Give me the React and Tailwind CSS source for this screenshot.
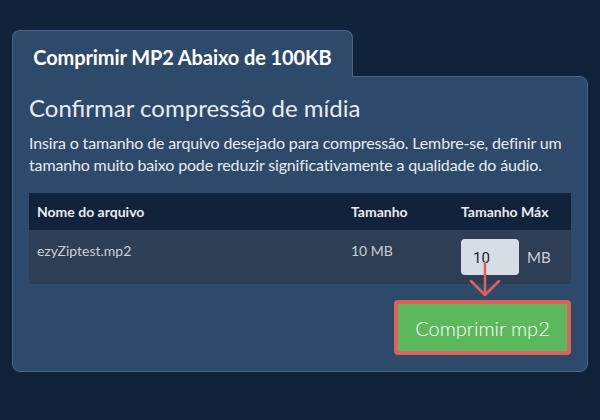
export default function App() {
  return (
    <div
      className="w-[600px] h-[420px] bg-[#10233a] px-3 pt-[30px]"
      style={{ fontFamily: "Lato, 'Open Sans', sans-serif" }}
    >
      <div className="w-[341px] h-[47px] bg-[#2d4a6b] border border-b-0 border-[#4a6788] rounded-t-lg flex items-center justify-center pt-[5px] relative z-10 -mb-px">
        <h1 className="text-[20px] font-bold text-white tracking-[-0.1px]">Comprimir MP2 Abaixo de 100KB</h1>
      </div>
      <div className="bg-[#2d4a6b] border border-[#4a6788] rounded-b-lg rounded-tr-lg px-4 pb-4 pt-[16px]">
        <h2 className="text-[24px] leading-[30px] text-[#e8ebef]">Confirmar compressão de mídia</h2>
        <p className="text-[16px] leading-[22px] tracking-[-0.15px] text-[#e8ebef] mt-[9px] -mr-2">
          Insira o tamanho de arquivo desejado para compressão. Lembre-se, definir um tamanho muito baixo pode reduzir significativamente a qualidade do áudio.
        </p>
        <div className="mt-[17px]">
          <div className="grid grid-cols-[314px_110px_1fr] bg-[#10233a] h-[37px] items-center text-[14px] font-bold text-[#e8ebef]">
            <div className="px-2">Nome do arquivo</div>
            <div className="px-2">Tamanho</div>
            <div className="px-2">Tamanho Máx</div>
          </div>
          <div className="grid grid-cols-[314px_110px_1fr] bg-[#2e3f55] py-[9px] text-[14px] text-[#c9ced6]">
            <div className="px-2 pt-px">ezyZiptest.mp2</div>
            <div className="px-2 pt-px">10 MB</div>
            <div className="px-2 flex items-center gap-2 relative">
              <div className="w-[58px] h-[36px] bg-[#d8dde5] rounded-sm flex items-center pl-3 pt-[2px] text-[15px] text-[#222]" style={{ fontFamily: "Roboto, sans-serif" }}>10</div>
              <span className="text-[15px] text-[#c9ced6]">MB</span>
              <svg className="absolute left-[16px] top-[23px]" width="32" height="36" viewBox="0 0 32 36" fill="none">
                <path d="M16 0 V33 M2 19 L16 33 L30 19" stroke="#e0605c" strokeWidth="2.5" strokeLinecap="round" strokeLinejoin="round" />
              </svg>
            </div>
          </div>
        </div>
        <div className="flex justify-end mt-4">
          <button className="w-[177px] h-[55px] bg-[#5cb85c] border-4 border-[#e0605c] rounded text-[20px] font-light text-white">
            Comprimir mp2
          </button>
        </div>
      </div>
    </div>
  );
}
